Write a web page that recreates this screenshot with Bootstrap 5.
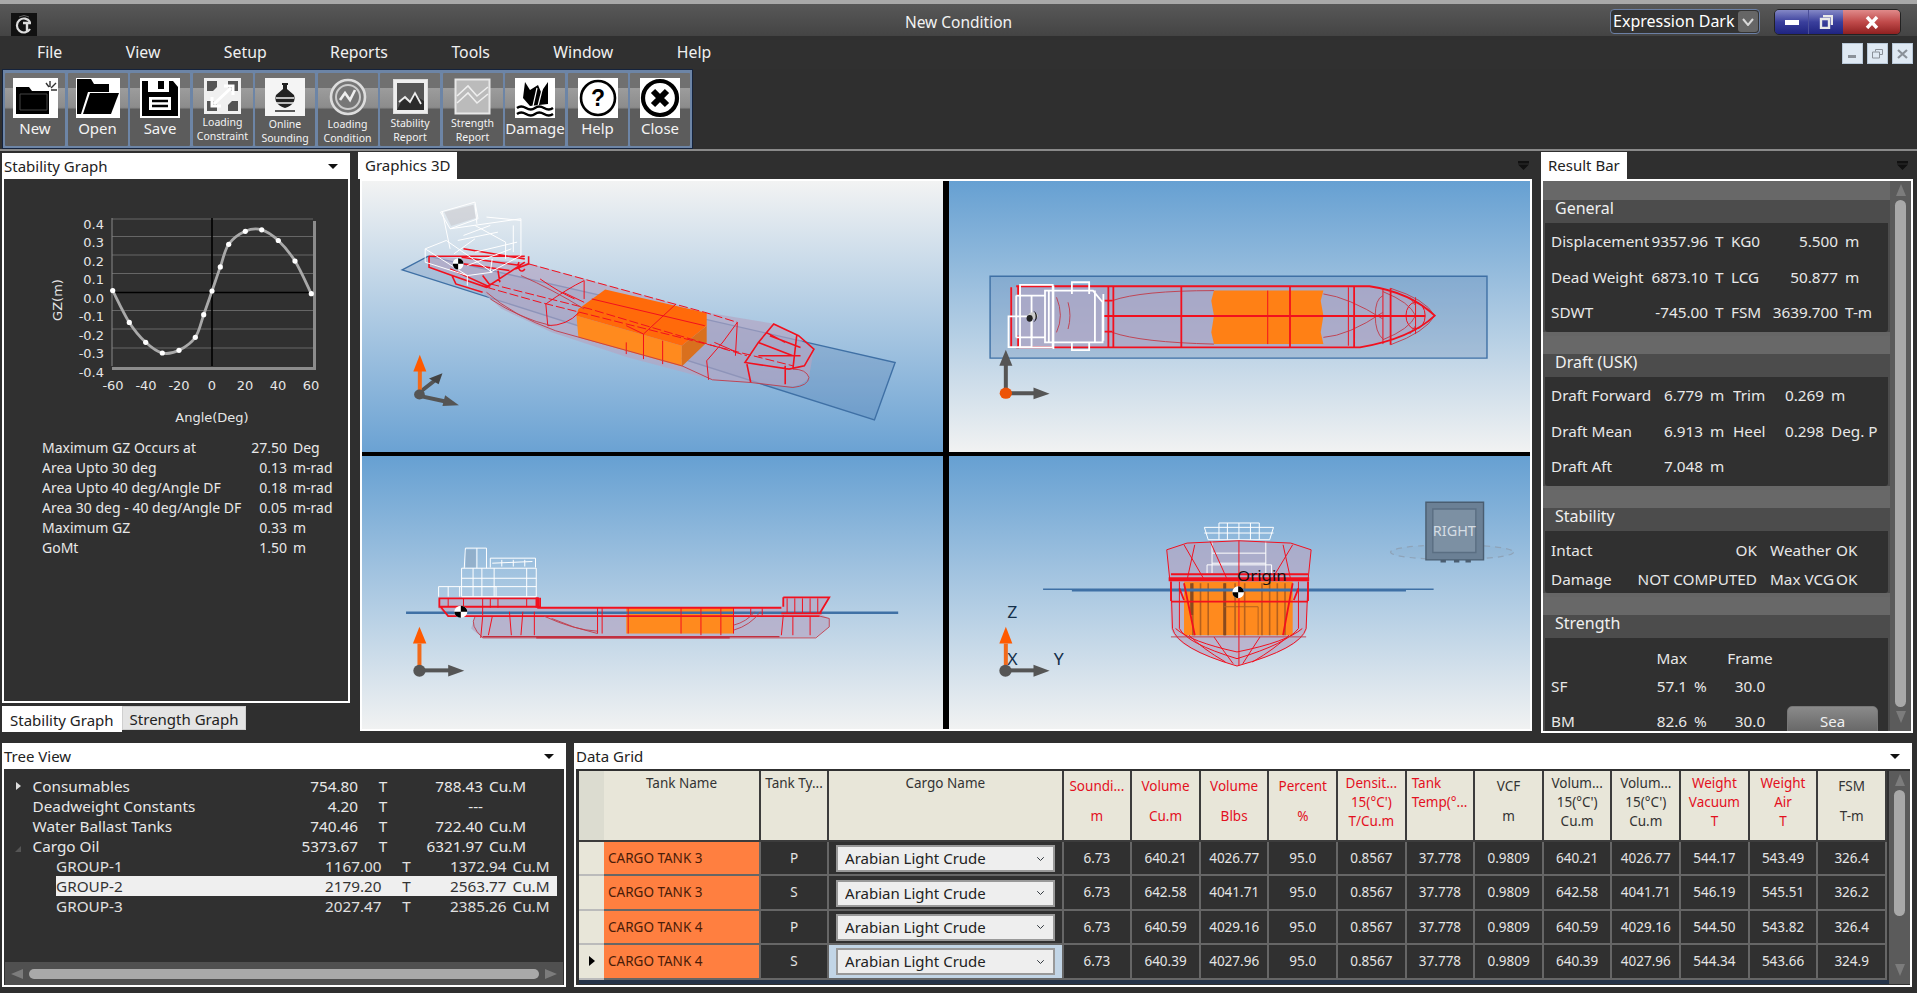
<!DOCTYPE html>
<html lang="en">
<head>
<meta charset="UTF-8" />
<title>New Condition</title>
<link href="https://cdn.jsdelivr.net/npm/bootstrap@5.3.0/dist/css/bootstrap.min.css" rel="stylesheet" />
<style>
  html, body { height: 100%; overflow: hidden; }
  body { background: #2f2f2f; color: #e8e8e8; font-family: "Noto Sans", "Open Sans", sans-serif; font-size: 15.5px; }
  .app-shell { width: 1917px; height: 993px; }

  /* title + menu */
  .title-bar { height: 36px; border-top: 4px solid #a9a9a9; background: linear-gradient(#585858, #444); }
  .title-side { flex: 1 1 0; }
  .app-logo { width: 26px; height: 23px; margin: 9px 0 0 11px; display: block; }
  .title-text { color: #f2f2f2; font-size: 15.5px; line-height: 36px; }
  .theme-combo { width: 150px; height: 25px; margin-top: 5px; border: 1px solid #6c80a5; border-radius: 4px; background: #333; color: #fff; font-size: 16px; line-height: 22px; padding-left: 2px; }
  .theme-arrow { width: 20px; height: 21px; margin: 1px; border-radius: 3px; background: #666; margin-left: auto; }
  .win-btns { margin: 5px 16px 0 14px; height: 26px; border: 1px solid #222; border-radius: 5px; overflow: hidden; }
  .win-btn { height: 100%; border: 0; padding: 0; display: flex; align-items: center; justify-content: center; }
  .win-min { width: 33px; background: linear-gradient(#8488c6, #3a3f9c 50%, #1f2480); }
  .win-max { width: 35px; background: linear-gradient(#8488c6, #3a3f9c 50%, #1f2480); border-left: 1px solid #4b4f9a; }
  .win-close { width: 57px; background: linear-gradient(#e08a8a, #c04a4a 50%, #8f2020); }
  .menu-bar { height: 33px; background: #303030; }
  .menu-items { padding-left: 37px; gap: 63.5px; }
  .menu-items a { color: #f0f0f0; font-size: 15.8px; text-decoration: none; line-height: 32px; }
  .mdi-btns { gap: 4px; margin: 7px 4px 0 0; }
  .mdi-btn { width: 21px; height: 21px; background: #dfe9f3; border: 1px solid #b8c8d8; padding: 0; display: flex; align-items: center; justify-content: center; }

  /* toolbar */
  .tool-strip { height: 82px; border-bottom: 2px solid #8a8a8a; padding-left: 2px; }
  .tool-box { width: 691px; height: 80px; padding: 3px 2px; gap: 2.5px; background: #6d85a6; border: 1px solid #15233c; }
  .tool-btn { width: 60px; height: 73px; padding: 5px 0 0; border: 0; border-radius: 1px; color: #f4f4f4; font-size: 15px; line-height: 18px; display: flex; flex-direction: column; align-items: center; background: linear-gradient(#707070 0 21%, #9c9c9c 21%, #8c8c8c 47%, #5c5c5c 50%); }
  .tool-btn.tool-small { font-size: 10.5px; line-height: 14px; }
  .tool-btn svg { display: block; flex: none; margin-bottom: 1px; }

  /* dock panels */
  .dock-top { height: 585px; padding: 1px 5px 0 2px; display: grid; grid-template-columns: 348px 1176px 371px; column-gap: 8px; }
  .dock-top > :nth-child(3) { margin-left: -1px; }
  .dock-bottom { height: 250px; padding: 6px 5px 0 2px; display: grid; grid-template-columns: 564px 1338px; column-gap: 8px; }
  .head-white { height: 26px; background: #fff; color: #222; font-size: 15px; line-height: 26px; padding: 0 12px 0 2px; margin-top: 1px; }
  .drop-tri { width: 0; height: 0; border-left: 5px solid transparent; border-right: 5px solid transparent; border-top: 5px solid #111; }
  .head-tab { height: 27px; background: #fff; color: #222; font-size: 15px; line-height: 27px; padding: 0 7px; }
  .head-dark { height: 27px; padding-right: 5px; }

  .graph-body { height: 524px; background: #303030; border: 2px solid #fff; border-top: 0; }
  .graph-body svg { display: block; }
  .graph-body text { fill: #e6e6e6; font-size: 13px; font-family: "DejaVu Sans", sans-serif; }
  .stat-list { margin-top: -1px; padding-left: 38px; display: grid; grid-template-columns: 206px 39px 6px auto; grid-auto-rows: 20px; font-size: 14px; line-height: 20px; }
  .stat-list > * { white-space: nowrap; overflow: hidden; }
  .stat-val { text-align: right; }
  .stat-unit { grid-column: 4; }
  .side-tabs { margin-top: 3px; }
  .side-tabs .nav-link { padding: 0 7px; height: 24px; line-height: 24px; font-size: 15px; color: #222; background: #e4e4e4; border: 1px solid #cfcfcf; }
  .side-tabs .nav-link.active { background: #fff; border-color: #fff; height: 26px; line-height: 26px; }

  /* 3D views */
  .view-frame { margin-left: 2px; width: 1172px; height: 552px; border: 2px solid #fff; background: #000; display: grid; grid-template-columns: 581px 581px; grid-template-rows: 271px 273px; gap: 4px 6px; }
  .view-frame svg { display: block; width: 100%; height: 100%; }
  .view-frame svg * { vector-effect: non-scaling-stroke; }
  .view-sky-down { background: linear-gradient(#f2f3f3, #6ba2d3); }
  .view-sky-up { background: linear-gradient(#66a0d2, #f1f2f2); }
  .r { fill: none; stroke: #f2101e; stroke-width: 1; }
  .rb { fill: none; stroke: #f2101e; stroke-width: 1.8; }
  .rd { fill: none; stroke: #c23a48; stroke-width: .9; }
  .w { fill: none; stroke: #fff; stroke-width: 1; }
  .wb { fill: none; stroke: #fff; stroke-width: 1.8; }
  .plane { fill: rgba(70,110,165,.22); stroke: #3f70a5; stroke-width: 1.4; }
  .hull { fill: rgba(180,165,195,.68); stroke: none; }
  .view-label { font-family: "Noto Sans", sans-serif; font-size: 46px; fill: #15304a; }
  .view-origin { font-family: "Noto Sans", sans-serif; font-size: 44px; fill: #111; }
  .view-cube-text { font-family: "Noto Sans", sans-serif; font-size: 42px; fill: #d5dde4; }

  /* result bar */
  .result-frame { height: 554px; border: 2px solid #fff; background: #666; overflow: hidden; }
  .result-scroll { flex: 1; height: 100%; overflow: hidden; padding-top: 1px; }
  .rs-group { margin-bottom: 4px; background: linear-gradient(#686868 0 18px, #4c4c4c 18px); padding: 0 2px 0; }
  .rs-title { height: 41px; padding: 14px 0 0 10px; font-size: 16px; line-height: 24px; color: #f0f0f0; }
  .rs-body { background: #303030; padding-left: 6px; border-radius: 0 0 3px 3px; display: grid; white-space: nowrap; font-size: 15.3px; }
  .rs-body > div { display: flex; align-items: center; overflow: hidden; }
  .rs-body .rv { justify-content: flex-end; }
  .rs-body .ru { padding-left: 7px; }
  .rs-general { height: 109px; grid-template-columns: 98px 59px 23px 39px 68px auto; grid-auto-rows: 35.5px; padding-top: 1px; }
  .rs-draft { height: 109px; grid-template-columns: 102px 50px 30px 46px 45px auto; grid-auto-rows: 35.5px; padding-top: 1px; }
  .rs-stab { height: 62px; grid-template-columns: 80px 126px 13px 66px auto; grid-template-rows: 38px 20px; }
  .rs-strength { height: 110px; grid-template-columns: 98px 38px 26px 74px auto; grid-template-rows: 24px 33px 36px; padding-top: 8px; }
  .rs-strength .rf { justify-content: center; }
  .sea-btn { width: 91px; height: 30px; margin-top: 3px; padding: 0; border: 1px solid #777; border-radius: 5px 5px 0 0; background: linear-gradient(#8a8a8a, #626262); color: #f0f0f0; font-size: 15px; align-self: flex-start; }
  .rs-bar { width: 21px; background: #5b5b5b; padding-top: 3px; }
  .scr-thumb-v { width: 11px; border-radius: 6px; background: #a9a9a9; }
  .tri-up { width: 0; height: 0; border: 5px solid transparent; border-top: 0; border-bottom: 12px solid #7c7c7c; }
  .tri-down { width: 0; height: 0; border: 5px solid transparent; border-bottom: 0; border-top: 12px solid #7c7c7c; }
  .tri-left { width: 0; height: 0; border: 5px solid transparent; border-left: 0; border-right: 12px solid #7c7c7c; }
  .tri-right { width: 0; height: 0; border: 5px solid transparent; border-right: 0; border-left: 12px solid #7c7c7c; }

  /* tree */
  .tree-body { height: 218px; background: #303030; border: 2px solid #fff; border-top: 0; font-size: 15.3px; }
  .tree-rows { height: 193px; padding-top: 7px; }
  .tree-row { height: 20px; line-height: 20px; padding-left: 12px; display: grid; grid-template-columns: 16.5px 257.5px 68px 50px 75px auto; white-space: nowrap; }
  .tree-row.tree-child { margin-left: 51.5px; margin-right: 7px; padding-left: 0; grid-template-columns: .5px 257.5px 68px 50px 75px auto; color: #e0e0e0; }
  .tree-row.tree-sel { background: #efefef; color: #333; }
  .tree-row .tv { text-align: right; }
  .tree-row .tt { text-align: center; }
  .tree-row .tu { padding-left: 6px; }
  .twisty { width: 0; height: 0; margin-top: 6px; border: 4px solid transparent; border-right: 0; border-left: 5px solid #ddd; }
  .twisty-open { width: 0; height: 0; margin: 10px 0 0 -1px; border: 3px solid transparent; border-right-color: #555; border-bottom-color: #555; }
  .scroll-h { height: 23px; background: #505050; margin: 0 1px; padding: 0 6px; }
  .scr-thumb-h { flex: 1; height: 10px; margin: 0 6px; border-radius: 5px; background: #a9a9a9; }

  /* data grid */
  .grid-body { height: 218px; border: 2px solid #fff; border-top: 0; background: #303030; padding: 2px 0 0 3px; }
  .grid-wrap { flex: 1; height: 213px; overflow: hidden; }
  .dg-table { table-layout: fixed; width: 1308px; margin: 0; border-collapse: separate; border-spacing: 0; --bs-table-bg: transparent; --bs-table-color: inherit; }
  .dg-table col { width: 68.6px; }
  .dg-table col.c-head { width: 25px; }
  .dg-table col.c-name { width: 157px; }
  .dg-table col.c-type { width: 68px; }
  .dg-table col.c-cargo { width: 234.5px; }
  .dg-table thead th { height: 71px; padding: 3px 1px 0; background: #e8e6d9; color: #333; font-size: 13.5px; font-weight: 400; line-height: 19px; text-align: center; vertical-align: top; border-right: 2px solid #3c3c3c; border-bottom: 2px solid #3c3c3c; overflow: hidden; white-space: nowrap; }
  .dg-table thead th.hot { color: #e3101e; }
  .dg-table thead th.corner { border-right: 0; background: #dcdcd0; }
  .dg-table thead th.tall { line-height: 30px; padding-top: 0; }
  .dg-table thead th.lft { text-align: left; padding-left: 5px; }
  .dg-table tbody td, .dg-table tbody th { height: 34.4px; padding: 0; background: #303030; color: #e4e4e4; font-size: 13.5px; font-weight: 400; text-align: center; vertical-align: middle; border-right: 2px solid #666; border-bottom: 2px solid #666; white-space: nowrap; }
  .dg-table tbody th { background: #e8e6d9; border-right: 0; border-bottom: 2px solid #bbb; color: #111; }
  .dg-table td.tank-cell { background: #ff7f40; color: #4a1c08; text-align: left; padding-left: 4px; }
  .dg-table td.cargo-cell { padding: 1px 7px 0; }
  .dg-table td.cargo-on { background: #c2d5e6; }
  .cargo-pick { height: 27px; padding: 0 24px 0 7px; border: 2px solid #999; border-radius: 0; font-size: 15px; line-height: 23px; color: #222; background-color: #eee; background-position: right 8px center; background-size: 9px 8px; }
  .row-arrow { display: inline-block; width: 0; height: 0; border: 5px solid transparent; border-right: 0; border-left: 6px solid #000; }
  .grid-bar { width: 21px; background: #5b5b5b; height: 213px; padding-top: 3px; }
  .grid-foot { height: 6px; background: #253349; }
</style>
</head>
<body>
<div class="app-shell d-flex flex-column">

  <!-- title bar -->
  <div class="title-bar d-flex">
    <div class="title-side">
      <svg class="app-logo" viewBox="0 0 26 23"><rect width="26" height="23" fill="#111"/><path d="M19 9a7 7 0 1 0 0 7" fill="none" stroke="#ddd" stroke-width="2.2"/><path d="M12 10h8M16 10v8" stroke="#ddd" stroke-width="2.4"/><path d="M8 4q5-3 10 0" fill="none" stroke="#666"/></svg>
    </div>
    <div class="title-text">New Condition</div>
    <div class="title-side d-flex justify-content-end">
      <div class="theme-combo d-flex">Expression Dark
        <span class="theme-arrow d-flex align-items-center justify-content-center"><svg width="12" height="8" viewBox="0 0 12 8"><path d="M1 1l5 6 5-6" fill="none" stroke="#d8d8d8" stroke-width="2"/></svg></span>
      </div>
      <div class="win-btns d-flex">
        <button class="win-btn win-min" aria-label="Minimize"><svg width="14" height="5"><rect width="14" height="5" fill="#fff"/></svg></button>
        <button class="win-btn win-max" aria-label="Restore"><svg width="14" height="14" viewBox="0 0 14 14"><path d="M4 1h9v9M2 4h8v9H2z" fill="none" stroke="#e8e8e8" stroke-width="2.4"/></svg></button>
        <button class="win-btn win-close" aria-label="Close"><svg width="14" height="13" viewBox="0 0 14 13"><path d="M2 1l10 11M12 1L2 12" stroke="#fff" stroke-width="3.4"/></svg></button>
      </div>
    </div>
  </div>

  <!-- menu -->
  <div class="menu-bar d-flex justify-content-between">
    <nav class="menu-items d-flex">
      <a href="#">File</a><a href="#">View</a><a href="#">Setup</a><a href="#">Reports</a><a href="#">Tools</a><a href="#">Window</a><a href="#">Help</a>
    </nav>
    <div class="mdi-btns d-flex">
      <button class="mdi-btn" aria-label="min"><svg width="9" height="9"><rect y="6" width="8" height="3" fill="#8a9199"/></svg></button>
      <button class="mdi-btn" aria-label="restore"><svg width="11" height="10" viewBox="0 0 11 10"><path d="M3.500 2.500V.5h7v5h-3M.5 3h7v6h-7z" fill="none" stroke="#8a9199"/></svg></button>
      <button class="mdi-btn" aria-label="close"><svg width="11" height="10" viewBox="0 0 11 10"><path d="M1 1l9 8M10 1L1 9" stroke="#8a9199" stroke-width="2.2"/></svg></button>
    </div>
  </div>

  <!-- toolbar -->
  <div class="tool-strip">
    <div class="tool-box d-flex">
      <button class="tool-btn">
        <svg width="45" height="40" viewBox="0 0 45 40"><rect width="45" height="40" fill="#fff"/><path d="M3 9h13l3 4h17v23H3z" fill="#000"/><path d="M7 16h27v16H7z" fill="none" stroke="#444"/><path d="M37 3v6M43 5l-5 5M44 12h-6M33 5l3 4" stroke="#333" stroke-width="1.4"/></svg>
        New</button>
      <button class="tool-btn">
        <svg width="44" height="40" viewBox="0 0 44 40"><rect width="44" height="40" fill="#fff"/><path d="M1 1h14l3 5h15v8H12L5 36H1z" fill="#000"/><path d="M14 15h29l-8 21H7z" fill="#000"/></svg>
        Open</button>
      <button class="tool-btn">
        <svg width="40" height="40" viewBox="0 0 40 40"><rect width="40" height="40" fill="#fff"/><path d="M2 3h6v11h21V3h4l5 6v29H2z" fill="#000"/><rect x="18" y="3" width="6" height="8" fill="#000"/><rect x="9" y="19" width="22" height="13" fill="#fff"/><path d="M12 23h16M12 28h16" stroke="#000" stroke-width="2.4"/></svg>
        Save</button>
      <button class="tool-btn tool-small">
        <svg width="37" height="36" viewBox="0 0 37 36"><rect width="37" height="36" fill="#f0f0f0"/><path d="M3 3h10v6l-4 4H3zM34 3v10h-6l-4-4V3zM3 33V23h6l4 4v6zM34 33H24v-6l4-4h6z" fill="#555"/><path d="M10 26L27 10M20 8h9v9M8 19v9h9" fill="none" stroke="#fff" stroke-width="3"/></svg>
        <span>Loading<br>Constraint</span></button>
      <button class="tool-btn tool-small">
        <svg width="40" height="38" viewBox="0 0 40 38"><rect width="40" height="38" fill="#f4f4f4"/><path d="M17 5h6v2h-1v4l7 6q3 9-9 13-12-4-9-13l7-6V7h-1z" fill="#222"/><path d="M11 20h18M11 25h18" stroke="#eee" stroke-width="1.6"/><path d="M10 33h20" stroke="#333" stroke-width="1.6"/></svg>
        <span>Online<br>Sounding</span></button>
      <button class="tool-btn tool-small">
        <svg width="38" height="38" viewBox="0 0 38 38"><circle cx="19" cy="19" r="17" fill="#777" stroke="#ddd" stroke-width="2.6"/><circle cx="19" cy="19" r="12" fill="none" stroke="#ccc" stroke-width="2"/><path d="M11 22l5-7 5 7 5-10" fill="none" stroke="#eee" stroke-width="2.6"/></svg>
        <span>Loading<br>Condition</span></button>
      <button class="tool-btn tool-small">
        <svg width="37" height="37" viewBox="0 0 37 37"><rect x="1.500" y="1.500" width="34" height="34" fill="#eee" stroke="#ddd"/><rect x="5" y="5" width="27" height="27" fill="#555"/><path d="M5 32l6-12 6 4 6-10 4 6 5 3v9z" fill="#2b2b2b"/><path d="M7 24l6-5 5 5 5-9 6 11" fill="none" stroke="#eee" stroke-width="1.8"/></svg>
        <span>Stability<br>Report</span></button>
      <button class="tool-btn tool-small">
        <svg width="37" height="37" viewBox="0 0 37 37"><rect x="1.500" y="1.500" width="34" height="34" fill="#bbb" stroke="#e8e8e8" stroke-width="2"/><path d="M3 18L14 8l9 10 11-9M3 25L14 15l9 10 11-9" fill="none" stroke="#eee" stroke-width="1.6"/></svg>
        <span>Strength<br>Report</span></button>
      <button class="tool-btn">
        <svg width="40" height="40" viewBox="0 0 40 40"><rect width="40" height="40" fill="#fff"/><path d="M10 4l5 8 8-5 3 7 7-10v22L15 28 8 20z" fill="#000"/><path d="M22 10l-4 18M28 8l-5 20" stroke="#fff" stroke-width="1.2"/><path d="M2 30q4-3 9 0t9 0 9 0 9 0M2 36q4-3 9 0t9 0 9 0 9 0" fill="none" stroke="#000" stroke-width="2.4"/></svg>
        Damage</button>
      <button class="tool-btn">
        <svg width="40" height="40" viewBox="0 0 40 40"><rect width="40" height="40" fill="#fff"/><circle cx="20" cy="20" r="17" fill="none" stroke="#000" stroke-width="2.6"/><text x="20" y="28" text-anchor="middle" font-family="Liberation Sans, sans-serif" font-weight="700" font-size="23" fill="#000">?</text></svg>
        Help</button>
      <button class="tool-btn">
        <svg width="40" height="40" viewBox="0 0 40 40"><rect width="40" height="40" fill="#fff"/><circle cx="20" cy="20" r="17" fill="none" stroke="#000" stroke-width="4.2"/><path d="M13 13l14 14M27 13L13 27" stroke="#000" stroke-width="6"/></svg>
        Close</button>
    </div>
  </div>

  <!-- top docks -->
  <div class="dock-top">
    <section>
      <div class="head-white d-flex justify-content-between align-items-center">Stability Graph <span class="drop-tri"></span></div>
      <div class="graph-body">
        <svg width="344" height="260" viewBox="4 180 344 260">
          <g stroke="#666" stroke-width="1"><path d="M112 220h201M112 237.500h201M112 256h201M112 274.500h201M112 311.500h201M112 330h201M112 349h201"/></g>
          <path d="M112 219v148" stroke="#888" fill="none"/>
          <path d="M314.500 222v148M112 369.500h204" stroke="#8c8c8c" stroke-width="3" fill="none"/>
          <path d="M112 293.500h201M212 219v148" stroke="#000" stroke-width="1.6" fill="none"/>
          <path id="gzCurve" fill="none" stroke="#a9a9a9" stroke-width="2.8"/>
          <g id="gzDots" fill="#fff"></g>
          <g text-anchor="end">
            <text x="104" y="230">0.4</text><text x="104" y="248">0.3</text><text x="104" y="267">0.2</text><text x="104" y="285">0.1</text><text x="104" y="304">0.0</text><text x="104" y="322">-0.1</text><text x="104" y="341">-0.2</text><text x="104" y="359">-0.3</text><text x="104" y="378">-0.4</text>
          </g>
          <g text-anchor="middle">
            <text x="113" y="391">-60</text><text x="146" y="391">-40</text><text x="179" y="391">-20</text><text x="212" y="391">0</text><text x="245" y="391">20</text><text x="278" y="391">40</text><text x="311" y="391">60</text>
            <text x="212" y="423">Angle(Deg)</text>
            <text transform="translate(62 301) rotate(-90)">GZ(m)</text>
          </g>
        </svg>
        <div class="stat-list">
          <div>Maximum GZ Occurs at</div><div class="stat-val">27.50</div><div class="stat-unit">Deg</div>
          <div>Area Upto 30 deg</div><div class="stat-val">0.13</div><div class="stat-unit">m-rad</div>
          <div>Area Upto 40 deg/Angle DF</div><div class="stat-val">0.18</div><div class="stat-unit">m-rad</div>
          <div>Area 30 deg - 40 deg/Angle DF</div><div class="stat-val">0.05</div><div class="stat-unit">m-rad</div>
          <div>Maximum GZ</div><div class="stat-val">0.33</div><div class="stat-unit">m</div>
          <div>GoMt</div><div class="stat-val">1.50</div><div class="stat-unit">m</div>
        </div>
      </div>
      <ul class="nav side-tabs">
        <li class="nav-item"><a class="nav-link active" href="#">Stability Graph</a></li>
        <li class="nav-item"><a class="nav-link" href="#">Strength Graph</a></li>
      </ul>
    </section>

    <section>
      <div class="head-dark d-flex justify-content-between align-items-center">
        <span class="head-tab">Graphics 3D</span>
        <svg width="11" height="9" viewBox="0 0 11 9"><rect width="11" height="2.500" fill="#111"/><path d="M0 3.500h11L5.500 9z" fill="#111"/></svg>
      </div>
      <div class="view-frame">
        <!-- isometric -->
        <div class="view-sky-down">
          <svg viewBox="5 37 1517 811" preserveAspectRatio="none">
            <polygon class="plane" points="110,303 178,262 1397,580 1343,752"/>
            <path class="hull" d="M180,262L430,280 900,430 1085,465 1185,540 1172,625Q1150,660 1100,650L1020,640 920,632 700,565 500,490 370,420 320,370 240,320 180,295Z"/>
            <polygon fill="#ff8a1e" points="565,440 840,530 840,592 570,505"/>
            <polygon fill="#d9701e" points="840,530 905,470 905,520 840,592"/>
            <polygon fill="#ff6a0a" points="640,362 905,432 905,470 840,530 565,440 570,420"/>
            <g class="r">
              <path stroke-dasharray="9 3" d="M440,285L900,430 985,460M330,355L470,400 1130,590M340,345L600,420 1010,560"/>
              <path d="M485,405Q540,360 585,335L585,390M485,405L490,470Q540,470 572,430M530,370L585,400M470,330Q520,370 560,390"/>
              <path d="M905,575Q950,520 985,460L980,560M910,632L905,575M925,520L985,550"/>
              <path stroke-width="1.6" d="M1005,580L1040,520 1080,465 1145,500 1185,540 1160,590 1120,600ZM1040,520L1130,560M1070,500L1150,535M1010,585L1020,640M1110,590V645M1140,500L1130,600M1040,560H1150M1060,490L1110,520"/>
              <path d="M605,390L900,470M740,495L825,405M740,495V570M790,515V585M695,470L740,495M695,520V555"/>
              <path stroke-width="1.6" d="M180,262V295L240,320 330,355 430,280M180,262L430,262M240,320L250,345 320,370M405,300L440,285V262M360,305L365,340M270,240L430,270M265,265L420,290M270,285L390,305M235,300L340,355M320,320L340,350M415,280A8,14 0 0 0 430,300"/>
            </g>
            <path class="rd" d="M330,370Q400,440 510,485L840,590 920,632 1020,640 1130,655Q1170,650 1172,625 1165,600 1130,600M420,320Q500,360 585,420M340,390Q420,450 500,470"/>
            <g class="w">
              <path d="M210,130L300,100 308,150 235,180ZM215,130L235,240M300,105L305,165M170,240L225,215 345,310 280,320ZM170,240V280L280,320V350M235,180L420,150V260L340,310M330,145L420,155M300,170L380,220M255,215L360,190M380,220V270M270,200L340,170M300,250L410,220M340,310L345,270M280,290L395,240M245,255L300,210M400,170V250"/>
            </g>
            <polygon points="220,130 296,108 302,148 238,172" fill="rgba(200,200,205,.6)"/>
            <ellipse cx="256" cy="285" rx="14" ry="17" fill="#fff"/><path d="M256,268A14,17 0 0 1 270,285H256ZM256,302A14,17 0 0 1 242,285H256Z" fill="#000"/>
            <path d="M155,670L205,625M155,680L235,700" stroke="#555" stroke-width="4"/>
            <polygon fill="#444" points="215,612 205,645 180,628"/><polygon fill="#555" points="258,708 215,710 222,678"/>
            <path d="M156,600V670" stroke="#f26a1a" stroke-width="4"/>
            <polygon fill="#ff5a00" points="156,557 173,607 139,607"/>
            <ellipse cx="155" cy="676" rx="14" ry="15" fill="#555"/>
          </svg>
        </div>
        <!-- plan -->
        <div class="view-sky-up">
          <svg viewBox="0 37 1513 811" preserveAspectRatio="none">
            <rect class="plane" x="107" y="322" width="1294" height="245"/>
            <path class="hull" d="M160,355L1100,352Q1200,370 1265,440 1200,510 1070,535L160,535Z"/>
            <path d="M690,365H975L968,395 975,440 968,490 975,525H690L683,490 690,440 683,395Z" fill="#ff8015"/>
            <path class="r" d="M830,365V525M1040,355V530M1130,360V525M1215,385V495M1190,440A25,40 0 0 1 1240,440 25,40 0 0 1 1190,440"/>
            <path class="rd" d="M425,395Q500,365 690,365M425,490Q500,520 690,525M975,375Q1040,385 1130,450M975,505Q1040,500 1130,430M280,385Q300,440 280,490M310,400Q320,440 310,480M1110,440Q1110,390 1130,380M1110,440Q1110,490 1130,510M1150,358Q1240,390 1265,440 1240,490 1150,527M1130,368Q1200,400 1215,440 1200,480 1130,512M1200,385L1215,410M1200,495L1215,470"/>
            <path class="rb" d="M175,352H1095Q1200,370 1265,440 1200,510 1070,535H175M400,441H1240M605,352V535M888,352V535M1055,352V535M1150,358V527M162,355V535M415,352V535M428,352V535M180,352V380M180,500V535M405,395H425M405,488H425"/>
            <g class="wb"><rect x="155" y="442" width="60" height="92"/><path d="M185,348H270V535H185ZM175,380H250M175,505H250M250,365H375L400,400V520H250ZM272,350V540M320,375V340H365V375M320,520V543H365V520M380,365V520M402,375V515M260,365V520M175,380V505M215,380V505"/></g>
            <path d="M205,440A15,18 0 0 1 232,440 15,18 0 0 1 205,440Z" fill="#ccc"/><path d="M218,425A14,18 0 0 1 218,460 10,18 0 0 0 218,425Z" fill="#000"/><ellipse cx="210" cy="448" rx="8" ry="10" fill="#222"/>
            <path d="M148,670V585M148,672H225" stroke="#555" stroke-width="4"/>
            <polygon fill="#555" points="148,542 165,590 131,590"/><polygon fill="#555" points="262,674 220,690 220,655"/>
            <ellipse cx="148" cy="672" rx="16" ry="17" fill="#ec5308"/>
          </svg>
        </div>
        <!-- profile -->
        <div class="view-sky-up">
          <svg viewBox="5 25 1517 815" preserveAspectRatio="none">
            <polygon class="hull" points="205,450 465,450 470,478 1100,478 1105,447 1225,447 1200,495 1225,510 1225,535 1190,565 320,568 290,540 300,505 230,505 205,480"/>
            <rect x="695" y="478" width="280" height="77" fill="#ff8a1e"/>
            <path d="M120,493H1405" stroke="#3f70a5" stroke-width="2.4"/>
            <g class="rb"><path d="M205,450H465V478H1100M207,450V475H470M210,475L230,503H300M300,503H1200M1105,447H1225L1200,495M1105,447V475M470,478V448M1100,495H1205"/><path d="M462,447V478" stroke-width="3"/></g>
            <g class="r"><path d="M230,450V475M270,450V475M320,450V500M340,450V478M360,450V478M435,450V475M620,478V555M632,478V555M700,478V555M838,478V555M890,478V560M942,478V560M975,478V555M1115,450V495M1135,450V495M1155,450V495M1175,450V495M1195,450V495"/><path d="M390,490L395,560M425,490L420,560M455,490V560M1105,500L1100,560M1130,505V560M1175,505V560M320,505L315,568M345,505L335,560M1020,480V500M1050,480V500"/></g>
            <path class="rd" d="M300,505Q285,530 320,568H1190L1225,535V510L1200,503M480,503Q560,545 620,548M500,510Q560,540 620,555M975,545Q1020,530 1045,490M975,530Q1010,520 1030,490"/>
            <path d="M460,566H965" stroke="#c23040" stroke-width="2.4"/><path d="M320,564H1095" stroke="#c23040" stroke-width="1.2"/>
            <g class="w"><rect x="265" y="360" width="195" height="85"/><path d="M272,360L275,300H330V360M305,300V360M340,358V330H458V358M345,345L450,340M265,390H460M270,415H460M205,445V415H355V445M230,415V445M260,415V445M295,360V445M318,360V445M350,360V445M435,360V445M370,335V355M400,335V355M430,335V355"/></g>
            <rect x="276" y="305" width="26" height="52" fill="rgba(140,165,190,.6)"/>
            <ellipse cx="263" cy="490" rx="17" ry="18" fill="#fff"/><path d="M263,472A17,18 0 0 1 280,490H263ZM263,508A17,18 0 0 1 246,490H263Z" fill="#000"/>
            <path d="M155,660V585" stroke="#f26a1a" stroke-width="4"/>
            <polygon fill="#ff5a00" points="155,535 173,585 138,585"/>
            <path d="M155,665H235" stroke="#555" stroke-width="4"/>
            <polygon fill="#555" points="272,666 230,683 230,648"/>
            <ellipse cx="155" cy="666" rx="16" ry="18" fill="#555"/>
          </svg>
        </div>
        <!-- body plan -->
        <div class="view-sky-up">
          <svg viewBox="0 25 1513 815" preserveAspectRatio="none">
            <polygon class="hull" points="567,305 620,285 755,278 890,285 943,305 935,395 575,395"/>
            <path class="hull" d="M575,395L578,540Q590,600 750,652 920,600 932,540L935,395Z"/>
            <rect x="612" y="400" width="283" height="160" fill="#ff8a1e"/>
            <path d="M635,405V560M655,405V560M675,405V560M718,405V560M745,405V560M770,405V560M815,405V560M835,405V560M855,405V560M875,405V560" stroke="#b5601e" stroke-width="1.6"/>
            <path d="M632,405V500M718,405V560" stroke="#8a4a1e" stroke-width="3"/>
            <path d="M716,475H805V560" fill="none" stroke="#b5601e"/>
            <g class="w"><path d="M665,238H845L835,275H675ZM703,275V225H808V275M685,280V375M825,280V375M685,315H825M685,345H825M672,375V350H840V375M725,225V275M785,225V275M755,225V275M665,255H845"/></g>
            <path d="M245,423H1262" stroke="#3f70a5" stroke-width="1.4"/><path d="M320,426H1190" stroke="#3f70a5" stroke-width="2.4"/>
            <g class="r">
              <path d="M567,305L620,285 755,278 890,285 943,305 935,395M567,305L575,395M755,278V650M612,290L665,395M895,290L840,395M680,280L725,395M640,290L620,395M870,290L890,395"/>
              <path d="M578,400L582,540Q595,600 750,652 915,600 930,540L935,400M600,400V540Q620,585 750,630 880,585 910,540V400M590,540Q630,580 750,610 880,580 920,540M625,560Q660,600 720,640M885,560Q850,600 790,640M690,565Q710,600 740,645M810,565Q790,600 765,645"/>
            </g>
            <path class="rb" d="M578,378H935M578,460H935M578,458V400M935,458V400M600,420L612,455M910,420L898,455M612,405L640,560M895,405L870,560"/>
            <path d="M572,393H938" stroke="#f2101e" stroke-width="4"/>
            <path d="M578,565H930" class="rd"/>
            <text class="view-origin" x="815" y="398" text-anchor="middle">Origin</text>
            <ellipse cx="753" cy="432" rx="15" ry="18" fill="#fff"/><path d="M753,414A15,18 0 0 1 768,432H753ZM753,450A15,18 0 0 1 738,432H753Z" fill="#000"/>
            <path d="M148,650V585" stroke="#f26a1a" stroke-width="4"/>
            <polygon fill="#ff5a00" points="148,535 165,585 131,585"/>
            <path d="M148,665H225" stroke="#555" stroke-width="4"/>
            <polygon fill="#555" points="262,666 220,684 220,648"/>
            <ellipse cx="147" cy="666" rx="16" ry="18" fill="#555"/>
            <text class="view-label" x="165" y="510" text-anchor="middle">Z</text>
            <text class="view-label" x="165" y="650" text-anchor="middle">X</text>
            <text class="view-label" x="286" y="650" text-anchor="middle">Y</text>
            <ellipse cx="1310" cy="312" rx="160" ry="22" fill="rgba(120,140,160,.08)" stroke="#8ea3b8" stroke-width="1.2" stroke-dasharray="6 5"/>
            <rect x="1242" y="163" width="150" height="172" fill="#6b8095" stroke="#4a5d70" stroke-width="1.4"/>
            <rect x="1260" y="183" width="112" height="130" fill="#7c90a3" stroke="#5a6e82" stroke-width="1.4"/>
            <path d="M1280,339h14M1315,339h14M1345,339h14" stroke="#4a5d70" stroke-width="2.4"/>
            <text class="view-cube-text" x="1316" y="265" text-anchor="middle" textLength="112" lengthAdjust="spacingAndGlyphs">RIGHT</text>
          </svg>
        </div>
      </div>
    </section>

    <section>
      <div class="head-dark d-flex justify-content-between align-items-center">
        <span class="head-tab">Result Bar</span>
        <svg width="11" height="9" viewBox="0 0 11 9"><rect width="11" height="2.500" fill="#111"/><path d="M0 3.500h11L5.500 9z" fill="#111"/></svg>
      </div>
      <div class="result-frame d-flex">
        <div class="result-scroll">
          <div class="rs-group">
            <div class="rs-title">General</div>
            <div class="rs-body rs-general">
              <div>Displacement</div><div class="rv">9357.96</div><div class="ru">T</div><div>KG0</div><div class="rv">5.500</div><div class="ru">m</div>
              <div>Dead Weight</div><div class="rv">6873.10</div><div class="ru">T</div><div>LCG</div><div class="rv">50.877</div><div class="ru">m</div>
              <div>SDWT</div><div class="rv">-745.00</div><div class="ru">T</div><div>FSM</div><div class="rv">3639.700</div><div class="ru">T-m</div>
            </div>
          </div>
          <div class="rs-group">
            <div class="rs-title">Draft (USK)</div>
            <div class="rs-body rs-draft">
              <div>Draft Forward</div><div class="rv">6.779</div><div class="ru">m</div><div>Trim</div><div class="rv">0.269</div><div class="ru">m</div>
              <div>Draft Mean</div><div class="rv">6.913</div><div class="ru">m</div><div>Heel</div><div class="rv">0.298</div><div class="ru">Deg. P</div>
              <div>Draft Aft</div><div class="rv">7.048</div><div class="ru">m</div>
            </div>
          </div>
          <div class="rs-group">
            <div class="rs-title">Stability</div>
            <div class="rs-body rs-stab">
              <div>Intact</div><div class="rv">OK</div><div></div><div>Weather</div><div>OK</div>
              <div>Damage</div><div class="rv">NOT COMPUTED</div><div></div><div>Max VCG</div><div>OK</div>
            </div>
          </div>
          <div class="rs-group">
            <div class="rs-title">Strength</div>
            <div class="rs-body rs-strength">
              <div></div><div class="rv">Max</div><div></div><div class="rf">Frame</div><div></div>
              <div>SF</div><div class="rv">57.1</div><div class="ru">%</div><div class="rf">30.0</div><div></div>
              <div>BM</div><div class="rv">82.6</div><div class="ru">%</div><div class="rf">30.0</div><div><button class="btn sea-btn">Sea</button></div>
            </div>
          </div>
        </div>
        <div class="rs-bar d-flex flex-column align-items-center">
          <span class="tri-up"></span>
          <div class="scr-thumb-v flex-grow-1 my-1"></div>
          <span class="tri-down mb-2"></span>
        </div>
      </div>
    </section>
  </div>

  <!-- bottom docks -->
  <div class="dock-bottom">
    <section>
      <div class="head-white d-flex justify-content-between align-items-center">Tree View <span class="drop-tri"></span></div>
      <div class="tree-body">
        <div class="tree-rows">
          <div class="tree-row"><span class="twisty"></span><span>Consumables</span><span class="tv">754.80</span><span class="tt">T</span><span class="tv">788.43</span><span class="tu">Cu.M</span></div>
          <div class="tree-row"><span></span><span>Deadweight Constants</span><span class="tv">4.20</span><span class="tt">T</span><span class="tv">---</span><span class="tu"></span></div>
          <div class="tree-row"><span></span><span>Water Ballast Tanks</span><span class="tv">740.46</span><span class="tt">T</span><span class="tv">722.40</span><span class="tu">Cu.M</span></div>
          <div class="tree-row"><span class="twisty-open"></span><span>Cargo Oil</span><span class="tv">5373.67</span><span class="tt">T</span><span class="tv">6321.97</span><span class="tu">Cu.M</span></div>
          <div class="tree-row tree-child"><span></span><span>GROUP-1</span><span class="tv">1167.00</span><span class="tt">T</span><span class="tv">1372.94</span><span class="tu">Cu.M</span></div>
          <div class="tree-row tree-child tree-sel"><span></span><span>GROUP-2</span><span class="tv">2179.20</span><span class="tt">T</span><span class="tv">2563.77</span><span class="tu">Cu.M</span></div>
          <div class="tree-row tree-child"><span></span><span>GROUP-3</span><span class="tv">2027.47</span><span class="tt">T</span><span class="tv">2385.26</span><span class="tu">Cu.M</span></div>
        </div>
        <div class="scroll-h d-flex align-items-center">
          <span class="tri-left"></span><div class="scr-thumb-h"></div><span class="tri-right"></span>
        </div>
      </div>
    </section>

    <section>
      <div class="head-white d-flex justify-content-between align-items-center">Data Grid <span class="drop-tri"></span></div>
      <div class="grid-body d-flex">
        <div class="grid-wrap">
          <table class="table dg-table">
            <colgroup><col class="c-head"><col class="c-name"><col class="c-type"><col class="c-cargo"><col><col><col><col><col><col><col><col><col><col><col><col></colgroup>
            <thead>
              <tr>
                <th class="corner"></th>
                <th>Tank Name</th>
                <th>Tank Ty...</th>
                <th>Cargo Name</th>
                <th class="hot tall">Soundi...<br>m</th>
                <th class="hot tall">Volume<br>Cu.m</th>
                <th class="hot tall">Volume<br>Blbs</th>
                <th class="hot tall">Percent<br>%</th>
                <th class="hot">Densit...<br>15(°C')<br>T/Cu.m</th>
                <th class="hot lft">Tank<br>Temp(°...</th>
                <th class="tall">VCF<br>m</th>
                <th>Volum...<br>15(°C')<br>Cu.m</th>
                <th>Volum...<br>15(°C')<br>Cu.m</th>
                <th class="hot">Weight<br>Vacuum<br>T</th>
                <th class="hot">Weight<br>Air<br>T</th>
                <th class="tall">FSM<br>T-m</th>
              </tr>
            </thead>
            <tbody>
              <tr><th></th><td class="tank-cell">CARGO TANK 3</td><td>P</td><td class="cargo-cell"><select class="form-select cargo-pick"><option>Arabian Light Crude</option></select></td><td>6.73</td><td>640.21</td><td>4026.77</td><td>95.0</td><td>0.8567</td><td>37.778</td><td>0.9809</td><td>640.21</td><td>4026.77</td><td>544.17</td><td>543.49</td><td>326.4</td></tr>
              <tr><th></th><td class="tank-cell">CARGO TANK 3</td><td>S</td><td class="cargo-cell"><select class="form-select cargo-pick"><option>Arabian Light Crude</option></select></td><td>6.73</td><td>642.58</td><td>4041.71</td><td>95.0</td><td>0.8567</td><td>37.778</td><td>0.9809</td><td>642.58</td><td>4041.71</td><td>546.19</td><td>545.51</td><td>326.2</td></tr>
              <tr><th></th><td class="tank-cell">CARGO TANK 4</td><td>P</td><td class="cargo-cell"><select class="form-select cargo-pick"><option>Arabian Light Crude</option></select></td><td>6.73</td><td>640.59</td><td>4029.16</td><td>95.0</td><td>0.8567</td><td>37.778</td><td>0.9809</td><td>640.59</td><td>4029.16</td><td>544.50</td><td>543.82</td><td>326.4</td></tr>
              <tr><th><span class="row-arrow"></span></th><td class="tank-cell">CARGO TANK 4</td><td>S</td><td class="cargo-cell cargo-on"><select class="form-select cargo-pick"><option>Arabian Light Crude</option></select></td><td>6.73</td><td>640.39</td><td>4027.96</td><td>95.0</td><td>0.8567</td><td>37.778</td><td>0.9809</td><td>640.39</td><td>4027.96</td><td>544.34</td><td>543.66</td><td>324.9</td></tr>
            </tbody>
          </table>
          <div class="grid-foot"></div>
        </div>
        <div class="grid-bar d-flex flex-column align-items-center">
          <span class="tri-up"></span>
          <div class="scr-thumb-v flex-grow-1 mt-1 mb-5"></div>
          <span class="tri-down mb-2"></span>
        </div>
      </div>
    </section>
  </div>
</div>

<script>
  const gzPts = [[112.7,291.6],[129.3,323.4],[145.7,343.3],[162.3,354],[179,351.3],[195.3,338.3],[203.7,315.7],[212,292],[220.3,267.9],[228.7,245.3],[245.3,232.3],[261.7,230.8],[278.3,241.5],[295,262.1],[311.3,294.7]];
  let d = `M${gzPts[0]}`;
  for (let i = 0; i < gzPts.length - 1; i++) {
    const a = gzPts[Math.max(i - 1, 0)], b = gzPts[i], c = gzPts[i + 1], e = gzPts[Math.min(i + 2, gzPts.length - 1)];
    d += `C${b[0] + (c[0] - a[0]) / 6},${b[1] + (c[1] - a[1]) / 6} ${c[0] - (e[0] - b[0]) / 6},${c[1] - (e[1] - b[1]) / 6} ${c[0]},${c[1]}`;
  }
  document.getElementById("gzCurve").setAttribute("d", d);
  document.getElementById("gzDots").innerHTML = gzPts.map(p => `<circle cx="${p[0]}" cy="${p[1]}" r="2.6"/>`).join("");
</script>
<script src="https://cdn.jsdelivr.net/npm/bootstrap@5.3.0/dist/js/bootstrap.bundle.min.js"></script>
</body>
</html>
